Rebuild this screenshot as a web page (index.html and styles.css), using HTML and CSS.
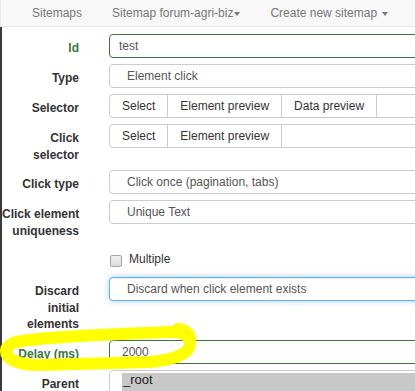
FILE: index.html
```html
<!DOCTYPE html>
<html lang="en">
<head>
    <meta charset="UTF-8">
    <meta name="viewport" content="width=device-width, initial-scale=1.0">
    <title>Edit selector</title>
    <link rel="stylesheet" href="styles.css">
</head>
<body>
    <!-- Top navigation -->
    <nav class="navbar">
        <ul class="nav-items">
            <li class="nav-item">Sitemaps</li>
            <li class="nav-item">Sitemap forum-agri-biz<span class="caret tight"></span></li>
            <li class="nav-item">Create new sitemap <span class="caret"></span></li>
        </ul>
    </nav>

    <div class="page">
        <form class="selector-form">
            <div class="form-group has-success">
                <label class="control-label">Id</label>
                <div class="field"><div class="form-control input-success">test</div></div>
            </div>

            <div class="form-group">
                <label class="control-label">Type</label>
                <div class="field"><div class="form-control select">Element click</div></div>
            </div>

            <div class="form-group">
                <label class="control-label">Selector</label>
                <div class="field btn-group">
                    <span class="btn first">Select</span>
                    <span class="btn">Element preview</span>
                    <span class="btn">Data preview</span>
                    <span class="btn-input"></span>
                </div>
            </div>

            <div class="form-group">
                <label class="control-label">Click<br>selector</label>
                <div class="field btn-group">
                    <span class="btn first">Select</span>
                    <span class="btn">Element preview</span>
                    <span class="btn-input"></span>
                </div>
            </div>

            <div class="form-group">
                <label class="control-label">Click type</label>
                <div class="field"><div class="form-control select">Click once (pagination, tabs)</div></div>
            </div>

            <div class="form-group">
                <label class="control-label">Click element<br>uniqueness</label>
                <div class="field"><div class="form-control select">Unique Text</div></div>
            </div>

            <div class="form-group checkbox-row">
                <span class="control-label"></span>
                <div class="field checkbox">
                    <span class="check-box"></span>
                    <span class="check-label">Multiple</span>
                </div>
            </div>

            <div class="form-group">
                <label class="control-label">Discard<br>initial<br>elements</label>
                <div class="field"><div class="form-control select focused">Discard when click element exists</div></div>
            </div>

            <div class="form-group has-success">
                <label class="control-label">Delay (ms)</label>
                <div class="field"><div class="form-control input-success delay">2000</div></div>
            </div>

            <div class="form-group">
                <label class="control-label">Parent</label>
                <div class="field">
                    <div class="multi-select">
                        <div class="option selected">_root</div>
                    </div>
                </div>
            </div>
        </form>

        <!-- Hand-drawn highlight over the delay field -->
        <svg class="scribble" viewBox="0 0 415 391" xmlns="http://www.w3.org/2000/svg">
            <path d="M22 341 C50 336 120 334 168 332 C184 331 191 337 190 344 C189 354 176 359 150 362 L40 365 C17 365 6 359 6 351 C6 346 12 342 22 341" fill="none" stroke="#ffff00" stroke-width="12" stroke-linecap="round" stroke-linejoin="round" />
            <path d="M178 329 C184 330 189 333 190 338" fill="none" stroke="#ffff00" stroke-width="12" stroke-linecap="round" />
        </svg>
    </div>
</body>
</html>
```

FILE: styles.css
```css
* {
    margin: 0;
    padding: 0;
    box-sizing: border-box;
    font-family: 'Liberation Sans', Arial, Helvetica, sans-serif;
}

html, body {
    overflow: hidden;
    height: 100%;
}

body {
    background-color: #fff;
    color: #333;
    font-size: 12px;
}

/* Navbar */
.navbar {
    height: 27px;
    background-color: #f8f8f8;
    border: 1px solid #e7e7e7;
    border-top: none;
    border-right: none;
    border-radius: 0 0 0 4px;
    padding-left: 16px;
}

.nav-items {
    list-style: none;
    display: flex;
}

.nav-item {
    padding: 0 15px;
    line-height: 26px;
    color: #777;
    white-space: nowrap;
}

.caret {
    display: inline-block;
    width: 0;
    height: 0;
    margin-left: 2px;
    vertical-align: middle;
    border-top: 4px solid #777;
    border-left: 3.5px solid transparent;
    border-right: 3.5px solid transparent;
}

.caret.tight {
    margin-left: 1px;
}

/* Page body */
.page {
    position: relative;
    height: calc(100% - 27px);
    border-left: 2px solid #3a3a3a;
}

.selector-form {
    padding-top: 7px;
    width: 470px;
}

.form-group {
    display: flex;
    align-items: flex-start;
    margin-bottom: 6px;
}

.control-label {
    width: 93px;
    flex-shrink: 0;
    padding: 6px 16px 1px 0;
    text-align: right;
    font-weight: bold;
    line-height: 16.7px;
    white-space: nowrap;
    color: #333;
}

.has-success .control-label {
    color: #3c763d;
}

.field {
    margin-left: 14px;
    width: 360px;
}

.form-control {
    height: 24px;
    border: 1px solid #ccc;
    border-radius: 4px;
    padding: 0 9px;
    line-height: 22px;
    color: #555;
    background-color: #fff;
    white-space: nowrap;
}

.form-control.select {
    padding-left: 17px;
}

.form-control.delay {
    padding-left: 12px;
}

.input-success {
    border-color: #3c763d;
}

.focused {
    border-color: #66afe9;
    box-shadow: inset 0 1px 1px rgba(0, 0, 0, 0.075), 0 0 6px rgba(102, 175, 233, 0.6);
}

/* Button group with trailing input */
.btn-group {
    display: flex;
    height: 24px;
}

.btn {
    height: 24px;
    padding: 0 12px;
    line-height: 22px;
    border: 1px solid #ccc;
    margin-left: -1px;
    background-color: #fff;
    color: #333;
    white-space: nowrap;
}

.btn.first {
    margin-left: 0;
    border-radius: 4px 0 0 4px;
}

.btn-input {
    flex: 1;
    height: 24px;
    border: 1px solid #ccc;
    margin-left: -1px;
    background-color: #fff;
}

/* Checkbox row */
.checkbox-row .control-label {
    height: 24px;
}

.checkbox {
    display: flex;
    align-items: flex-start;
    height: 24px;
}

.check-box {
    width: 12px;
    height: 12px;
    margin: 8px 0 0 1px;
    border: 1px solid #a6a6a6;
    border-radius: 2px;
    background: linear-gradient(#f0f0f0, #dcdcdc);
}

.check-label {
    margin-left: 7px;
    padding-top: 4px;
    line-height: 17px;
    color: #333;
}

/* Parent multi-select */
.multi-select {
    height: 60px;
    border: 1px solid #ccc;
    border-radius: 4px 4px 0 0;
    padding: 2px 0 0 12px;
    background-color: #fff;
}

.option {
    line-height: 14px;
    padding-left: 1px;
    color: #222;
    font-size: 13px;
}

.option.selected {
    background-color: #c8c8c8;
    height: 20px;
}

/* Highlight scribble */
.scribble {
    position: absolute;
    left: -2px;
    top: -27px;
    width: 415px;
    height: 391px;
    pointer-events: none;
}
```
